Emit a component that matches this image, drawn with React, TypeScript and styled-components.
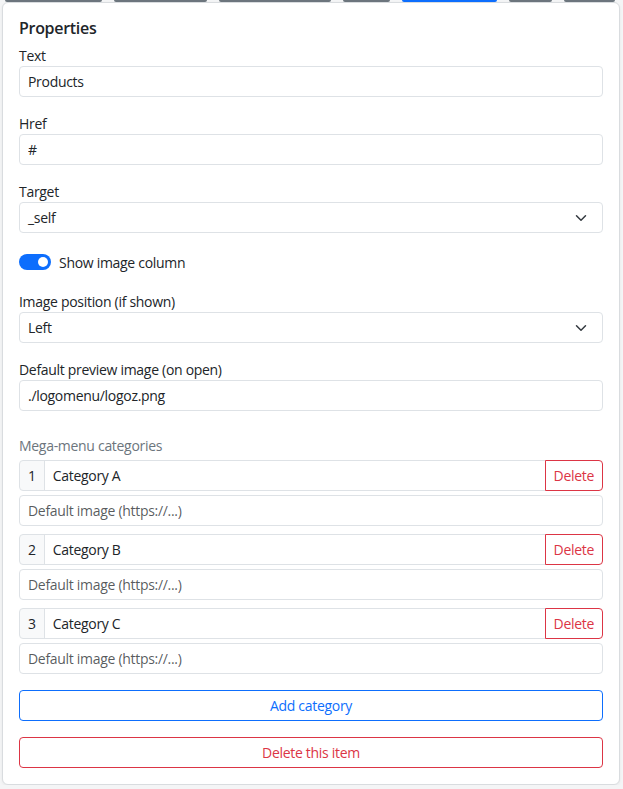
import React from "react";
import styled, { createGlobalStyle } from "styled-components";

const Global = createGlobalStyle`
  html, body { margin: 0; padding: 0; }
  body {
    background: #f4f5f6;
    font-family: "Open Sans", "Noto Sans", "Liberation Sans", sans-serif;
    font-size: 14px;
    letter-spacing: -0.3px;
    color: #212529;
  }
  * { box-sizing: border-box; }
`;

const Page = styled.div`
  padding: 0 3px 0 2px;
`;

const TabStrip = styled.div`
  display: flex;
  gap: 12px;
  padding-left: 3px;
  height: 2px;
  overflow: hidden;
`;

const TabStub = styled.div<{ $w: number; $active?: boolean }>`
  width: ${(p) => p.$w}px;
  height: 2px;
  flex: none;
  border-radius: 0 0 2px 2px;
  background: ${(p) => (p.$active ? "#0d6efd" : "#6c757d")};
`;

const Card = styled.div`
  background: #fff;
  border: 1px solid #d9dcdf;
  border-radius: 6px;
  padding: 16px;
  box-shadow: 0 1px 3px rgba(0, 0, 0, 0.06);
`;

const Heading = styled.h6`
  margin: 0 0 8px;
  font-size: 16px;
  line-height: 18px;
  font-weight: 600;
`;

const Group = styled.div`
  margin-bottom: 16px;
`;

const Label = styled.label<{ $muted?: boolean }>`
  display: block;
  font-size: 14px;
  line-height: 21px;
  color: ${(p) => (p.$muted ? "#6c757d" : "#212529")};
  margin-bottom: ${(p) => (p.$muted ? "4px" : "0")};
`;

const Input = styled.input`
  display: block;
  width: 100%;
  height: 31px;
  padding: 4px 8px;
  font: inherit;
  font-size: 14px;
  line-height: 21px;
  letter-spacing: -0.3px;
  color: #212529;
  background: #fff;
  border: 1px solid #dee2e6;
  border-radius: 4px;
  outline: none;
  &::placeholder { color: rgba(33, 37, 41, 0.75); }
`;

const SelectBox = styled.div`
  display: flex;
  align-items: center;
  justify-content: space-between;
  height: 31px;
  padding: 4px 14px 4px 8px;
  border: 1px solid #dee2e6;
  border-radius: 4px;
  background: #fff;
  line-height: 21px;
`;

const Chevron = () => (
  <svg width="14" height="12" viewBox="0 0 16 16" fill="none">
    <path d="m2 5 6 6 6-6" stroke="#343a40" strokeWidth="2" strokeLinecap="round" strokeLinejoin="round" />
  </svg>
);

const SwitchRow = styled.div`
  display: flex;
  align-items: center;
  gap: 8px;
  height: 26px;
  margin-bottom: 16px;
`;

const Switch = styled.span<{ $on?: boolean }>`
  width: 32px;
  height: 16px;
  border-radius: 8px;
  background: ${(p) => (p.$on ? "#0d6efd" : "#fff")};
  display: flex;
  align-items: center;
  justify-content: ${(p) => (p.$on ? "flex-end" : "flex-start")};
  padding: 0 3px;
  flex: none;
  &::after {
    content: "";
    width: 10px;
    height: 10px;
    border-radius: 50%;
    background: #fff;
  }
`;

const Section = styled.div`
  margin-top: 24px;
`;

const CatItem = styled.div`
  margin-bottom: 8px;
`;

const InputGroup = styled.div`
  display: flex;
  height: 31px;
  margin-bottom: 4px;
`;

const Addon = styled.span`
  display: flex;
  align-items: center;
  padding: 0 8px;
  background: #f8f9fa;
  border: 1px solid #dee2e6;
  border-radius: 4px 0 0 4px;
  color: #212529;
`;

const GroupInput = styled(Input)`
  flex: 1;
  min-width: 0;
  border-radius: 0;
  margin-left: -1px;
`;

const Button = styled.button<{ $variant: "primary" | "danger"; $block?: boolean }>`
  display: block;
  font: inherit;
  font-size: 14px;
  line-height: 21px;
  letter-spacing: -0.3px;
  padding: 4px 8px;
  background: #fff;
  cursor: pointer;
  color: ${(p) => (p.$variant === "primary" ? "#0d6efd" : "#dc3545")};
  border: 1px solid ${(p) => (p.$variant === "primary" ? "#0d6efd" : "#dc3545")};
  border-radius: 4px;
  width: ${(p) => (p.$block ? "100%" : "auto")};
`;

const GroupButton = styled(Button)`
  border-radius: 0 4px 4px 0;
  margin-left: -1px;
  position: relative;
`;

const Actions = styled.div`
  margin-top: 16px;
  display: flex;
  flex-direction: column;
  gap: 16px;
`;

const stubs = [97, 93, 112, 47, 95, 43, 51];
const categories = ["Category A", "Category B", "Category C"];

export default function App() {
  return (
    <>
      <Global />
      <Page>
        <TabStrip>
          {stubs.map((w, i) => (
            <TabStub key={i} $w={w} $active={i === 4} />
          ))}
        </TabStrip>
        <Card>
          <Heading>Properties</Heading>
          <Group>
            <Label>Text</Label>
            <Input defaultValue="Products" />
          </Group>
          <Group>
            <Label>Href</Label>
            <Input defaultValue="#" />
          </Group>
          <Group>
            <Label>Target</Label>
            <SelectBox>
              <span>_self</span>
              <Chevron />
            </SelectBox>
          </Group>
          <SwitchRow>
            <Switch $on />
            <span>Show image column</span>
          </SwitchRow>
          <Group>
            <Label>Image position (if shown)</Label>
            <SelectBox>
              <span>Left</span>
              <Chevron />
            </SelectBox>
          </Group>
          <Group>
            <Label>Default preview image (on open)</Label>
            <Input defaultValue="./logomenu/logoz.png" />
          </Group>
          <Section>
            <Label $muted>Mega-menu categories</Label>
            {categories.map((c, i) => (
              <CatItem key={c}>
                <InputGroup>
                  <Addon>{i + 1}</Addon>
                  <GroupInput defaultValue={c} />
                  <GroupButton $variant="danger">Delete</GroupButton>
                </InputGroup>
                <Input placeholder="Default image (https://...)" />
              </CatItem>
            ))}
          </Section>
          <Actions>
            <Button $variant="primary" $block>Add category</Button>
            <Button $variant="danger" $block>Delete this item</Button>
          </Actions>
        </Card>
      </Page>
    </>
  );
}
